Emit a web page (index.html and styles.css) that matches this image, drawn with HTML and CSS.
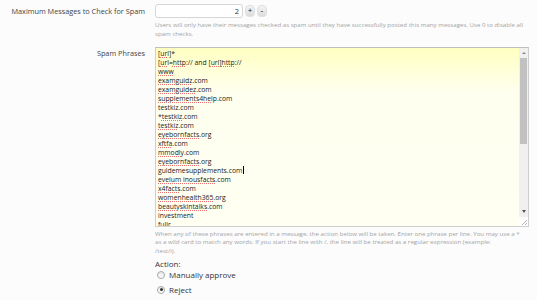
FILE: index.html
```html
<!DOCTYPE html>
<html lang="en">
<head>
  <meta charset="UTF-8" />
  <title>Spam Options</title>
  <link rel="stylesheet" href="styles.css">
</head>
<body>
  <form class="options">
    <div class="row">
      <label class="row-label">Maximum Messages to Check for Spam</label>
      <div class="row-control">
        <div class="spinbox">
          <span class="number-input">2</span>
          <span class="spin-btn">+</span>
          <span class="spin-btn">-</span>
        </div>
        <p class="hint">Users will only have their messages checked as spam until they have successfully posted this many messages. Use 0 to disable all spam checks.</p>
      </div>
    </div>

    <div class="row phrases-row">
      <label class="row-label">Spam Phrases</label>
      <div class="row-control">
        <div class="phrase-box">
          <div class="phrase-lines">
            <div>[<u>url</u>]*</div>
            <div>[<u>url</u>=<u>http</u>:// and [<u>url</u>]<u>http</u>://</div>
            <div><u>www</u></div>
            <div><u>examguidz</u>.com</div>
            <div><u>examguidez</u>.com</div>
            <div><u>supplements4help</u>.com</div>
            <div>testkiz.com</div>
            <div>*<u>testkiz</u>.com</div>
            <div><u>testkiz</u>.com</div>
            <div><u>eyebornfacts</u>.org</div>
            <div><u>xftfa</u>.com</div>
            <div><u>mmodly</u>.com</div>
            <div><u>eyebornfacts</u>.org</div>
            <div>guidemesupplements.com<span class="caret"></span></div>
            <div><u>evelum inousfacts</u>.com</div>
            <div><u>x4facts</u>.com</div>
            <div><u>womenhealth365</u>.org</div>
            <div><u>beautyskintalks</u>.com</div>
            <div>investment</div>
            <div>fullr</div>
          </div>
          <div class="scrollbar">
            <span class="arrow up"></span>
            <span class="thumb"></span>
            <span class="track"></span>
            <span class="arrow down"></span>
            <span class="grip">
              <svg width="9" height="9" viewBox="0 0 9 9"><path d="M8 3 L3 8 M8 6 L6 8" stroke="#999" stroke-width="0.8"/></svg>
            </span>
          </div>
        </div>
        <p class="hint hint-phrases">When any of these phrases are entered in a message, the action below will be taken. Enter one phrase per line. You may use a * as a wild card to match any words. If you start the line with /, the line will be treated as a regular expression (example:<br>/test/i).</p>

        <div class="action-title">Action:</div>
        <label class="radio"><span class="radio-dot"></span>Manually approve</label>
        <label class="radio"><span class="radio-dot checked"></span>Reject</label>
      </div>
    </div>
  </form>
</body>
</html>
```

FILE: styles.css
```css
body, html {
  margin: 0;
  padding: 0;
  background: #fcfcfd;
  font-family: 'Open Sans', 'Liberation Sans', sans-serif;
  color: #333;
  overflow: hidden;
}
.options {
  width: 529px;
  padding-top: 4px;
}
.row {
  display: grid;
  grid-template-columns: 145px 1fr;
  column-gap: 10px;
}
.row-label {
  text-align: right;
  font-size: 7.3px;
  line-height: 14px;
  color: #444;
}
.phrases-row {
  margin-top: 8px;
}
.phrases-row .row-label {
  line-height: 12px;
}
.spinbox {
  display: flex;
  align-items: center;
  height: 14px;
}
.number-input {
  box-sizing: border-box;
  width: 88px;
  height: 14px;
  border: 1px solid #d6d6d6;
  border-radius: 3px;
  background: #fff;
  font-size: 7.4px;
  line-height: 12px;
  text-align: right;
  padding-right: 3px;
}
.spin-btn {
  box-sizing: border-box;
  width: 10px;
  height: 12px;
  margin-left: 2px;
  border-radius: 4px;
  background: linear-gradient(#f4f4f4, #dcdcdc);
  border: 1px solid #e0e0e0;
  font-size: 7px;
  line-height: 10px;
  text-align: center;
  font-weight: bold;
  color: #555;
}
.hint {
  margin: 3px 0 0;
  font-size: 6.15px;
  line-height: 8.8px;
  color: #a3a3a3;
}
.hint-phrases {
  padding-right: 8px;
}
.phrase-box {
  display: flex;
  box-sizing: border-box;
  height: 180px;
  border: 1px solid #cfcfcf;
  border-top-color: #bdbdbd;
  background: linear-gradient(#ffffc2, #fffff0 45px, #fffff2);
}
.phrase-lines {
  flex: 1;
  overflow: hidden;
  padding: 1px 2px;
  font-size: 6.8px;
  line-height: 9px;
  color: #222;
  white-space: nowrap;
}
.phrase-lines u {
  text-decoration: underline dotted #ee7070;
  text-decoration-thickness: 1px;
  text-underline-offset: 1px;
}
.caret {
  display: inline-block;
  width: 1px;
  height: 8px;
  margin-left: 1px;
  vertical-align: -1px;
  background: #000;
}
.scrollbar {
  width: 9px;
  display: flex;
  flex-direction: column;
  background: #f0f0f0;
}
.arrow {
  height: 10px;
  display: flex;
  align-items: center;
  justify-content: center;
}
.arrow::before {
  content: '';
  border-left: 2px solid transparent;
  border-right: 2px solid transparent;
}
.arrow.up::before {
  border-bottom: 2px solid #888;
}
.arrow.down::before {
  border-top: 3px solid #555;
}
.thumb {
  height: 86px;
  margin: 0 1px;
  background: #c1c1c1;
}
.track {
  flex: 1;
}
.grip {
  height: 9px;
  background: #fff;
  display: block;
}
.grip svg {
  display: block;
}
.action-title {
  margin-top: 3px;
  font-size: 8px;
  line-height: 10px;
  color: #333;
}
.radio {
  display: flex;
  align-items: center;
  gap: 4px;
  font-size: 8px;
  line-height: 12px;
  color: #333;
}
.radio + .radio {
  margin-top: 3px;
}
.radio-dot {
  box-sizing: border-box;
  width: 8px;
  height: 8px;
  border-radius: 50%;
  border: 1px solid #a8a8a8;
  background: linear-gradient(#e8e8e8, #fff);
  margin-left: 2px;
  display: flex;
  align-items: center;
  justify-content: center;
}
.radio-dot.checked::after {
  content: '';
  width: 3px;
  height: 3px;
  border-radius: 50%;
  background: #333;
}
```
